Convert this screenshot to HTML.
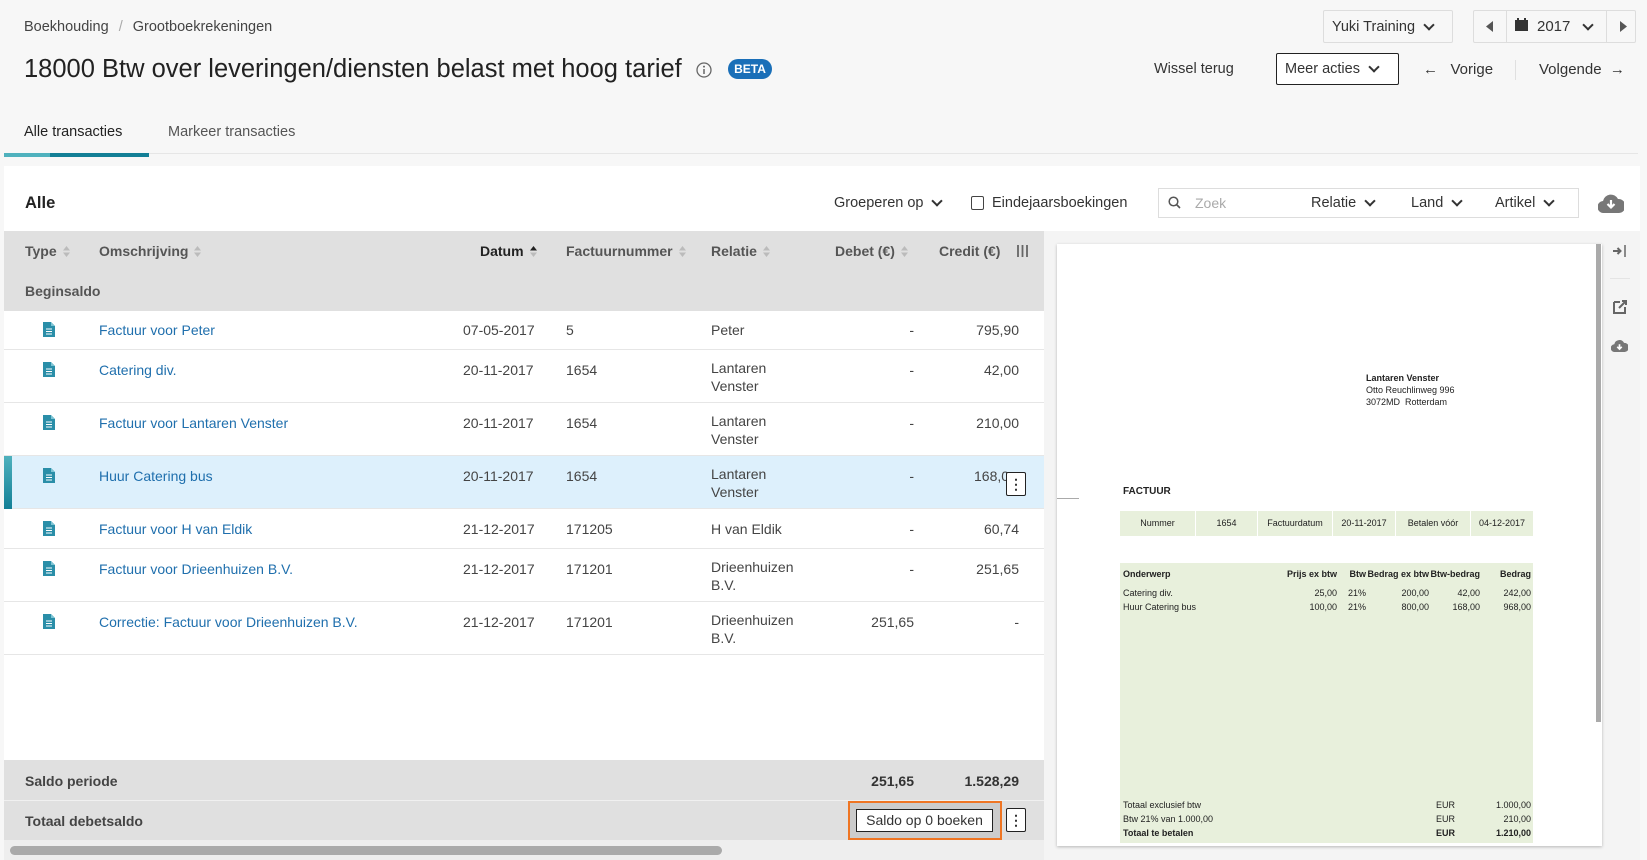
<!DOCTYPE html>
<html><head><meta charset="utf-8">
<style>
*{box-sizing:border-box;margin:0;padding:0}
body{width:1647px;height:860px;overflow:hidden;background:#f7f7f7;font-family:"Liberation Sans",sans-serif;color:#333;font-size:14px;position:relative}
.a{position:absolute;white-space:nowrap}
.hd{color:#555;font-weight:bold;font-size:14px}
.lk{color:#1f6fad;font-size:14px}
.tx{color:#444;font-size:14px}
.sort{display:inline-block;width:7px;height:11px;vertical-align:-1px;margin-left:6px}
.box{position:absolute;border:1px solid #ddd;background:#f7f7f7}
.chev{display:inline-block;width:8px;height:8px;border-right:2px solid #333;border-bottom:2px solid #333;transform:rotate(45deg);vertical-align:2px;margin-left:10px}
.row{position:absolute;left:4px;width:1040px;border-bottom:1px solid #e6e6e6;background:#fff}
.ico{position:absolute;left:43px;width:12px;height:15px}
.inv{font-size:9px;color:#222;position:absolute;white-space:nowrap}
</style></head><body>
<svg width="0" height="0" style="position:absolute"><defs>
<symbol id="doc" viewBox="0 0 12 15"><path d="M0 0H8L12 4V15H0Z" fill="#2a8ea8"/><path d="M8 0V4H12Z" fill="#7cc4d4"/><path d="M3 7H9M3 9.5H9M3 12H9" stroke="#fff" stroke-width="1"/></symbol>
<symbol id="srt" viewBox="0 0 7 11"><path d="M0 4.5L3.5 0L7 4.5Z M0 6.5L3.5 11L7 6.5Z" fill="#bbb"/></symbol>
</defs></svg>

<div class="a" style="left:24px;top:19px;font-size:14.5px;color:#444">Boekhouding <span style="color:#aaa;margin:0 6px">/</span> Grootboekrekeningen</div>
<div class="a" style="left:24px;top:55px;font-size:25.5px;color:#222">18000 Btw over leveringen/diensten belast met hoog tarief</div>
<svg class="a" style="left:696px;top:62px" width="16" height="16" viewBox="0 0 16 16"><circle cx="8" cy="8" r="7" fill="none" stroke="#666" stroke-width="1.3"/><circle cx="8" cy="4.6" r="1" fill="#666"/><path d="M8 7V12" stroke="#666" stroke-width="1.5"/></svg>
<div class="a" style="left:728px;top:59px;width:44px;height:20px;border-radius:10px;background:#1a6fb8;color:#fff;font-size:12px;font-weight:bold;text-align:center;line-height:20px">BETA</div>

<div class="box" style="left:1323px;top:10px;width:130px;height:33px;border-radius:2px"></div>
<div class="a" style="left:1332px;top:19px;font-size:14.5px">Yuki Training<span class="chev"></span></div>
<div class="box" style="left:1473px;top:10px;width:163px;height:33px;border-radius:2px"></div>
<div class="a" style="left:1506px;top:10px;width:1px;height:33px;background:#ddd"></div>
<div class="a" style="left:1606px;top:10px;width:1px;height:33px;background:#ddd"></div>
<svg class="a" style="left:1486px;top:21px" width="7" height="11"><path d="M7 0V11L0 5.5Z" fill="#555"/></svg>
<svg class="a" style="left:1620px;top:21px" width="7" height="11"><path d="M0 0V11L7 5.5Z" fill="#555"/></svg>
<svg class="a" style="left:1515px;top:18px" width="13" height="13" viewBox="0 0 13 13"><rect x="0" y="2" width="13" height="11" fill="#333"/><rect x="2" y="0" width="2" height="3" fill="#333"/><rect x="9" y="0" width="2" height="3" fill="#333"/></svg>
<div class="a" style="left:1537px;top:18px;font-size:15px">2017<span class="chev" style="margin-left:14px"></span></div>

<div class="a" style="left:1154px;top:61px;font-size:14.5px">Wissel terug</div>
<div class="a" style="left:1276px;top:53px;width:123px;height:32px;border:1px solid #222;background:#fff;border-radius:2px"></div>
<div class="a" style="left:1285px;top:61px;font-size:14.5px">Meer acties<span class="chev"></span></div>
<div class="a" style="left:1423px;top:61px;font-size:15px">←&nbsp;&nbsp;&nbsp;Vorige</div>
<div class="a" style="left:1515px;top:60px;width:1px;height:20px;background:#e0e0e0"></div>
<div class="a" style="left:1539px;top:61px;font-size:15px">Volgende&nbsp;&nbsp;→</div>

<div class="a" style="left:24px;top:124px;font-size:14.5px;color:#222">Alle transacties</div>
<div class="a" style="left:168px;top:124px;font-size:14.5px;color:#555">Markeer transacties</div>
<div class="a" style="left:4px;top:153px;width:1634px;height:1px;background:#e6e6e6"></div>
<div class="a" style="left:4px;top:153px;width:145px;height:4px;background:#137f96"></div>
<div class="a" style="left:4px;top:153px;width:46px;height:4px;background:#4fb1bd"></div>

<div class="a" style="left:4px;top:166px;width:1636px;height:694px;background:#fff"></div>
<div class="a" style="left:25px;top:194px;font-size:16.5px;font-weight:bold;color:#222">Alle</div>
<div class="a" style="left:834px;top:195px;font-size:14.5px">Groeperen op<span class="chev"></span></div>
<div class="a" style="left:971px;top:196px;width:13px;height:14px;border:1.5px solid #444;border-radius:2px"></div>
<div class="a" style="left:992px;top:195px;font-size:14.5px">Eindejaarsboekingen</div>
<div class="a" style="left:1158px;top:188px;width:421px;height:30px;border:1px solid #ddd"></div>
<svg class="a" style="left:1168px;top:196px" width="13" height="13"><circle cx="5.5" cy="5.5" r="4.3" fill="none" stroke="#555" stroke-width="1.5"/><path d="M8.5 8.5L12 12" stroke="#555" stroke-width="1.6"/></svg>
<div class="a" style="left:1195px;top:195px;font-size:14px;color:#aaa">Zoek</div>
<div class="a" style="left:1311px;top:195px;font-size:14.5px">Relatie<span class="chev"></span></div>
<div class="a" style="left:1411px;top:195px;font-size:14.5px">Land<span class="chev"></span></div>
<div class="a" style="left:1495px;top:195px;font-size:14.5px">Artikel<span class="chev"></span></div>
<svg class="a" style="left:1598px;top:193px" width="26" height="20" viewBox="0 0 26 20"><path d="M6 20A6 6 0 0 1 5 8A8 8 0 0 1 20 6A7 7 0 0 1 21 20Z" fill="#777"/><path d="M13 7V14M9.5 11L13 14.5L16.5 11" stroke="#fff" stroke-width="2.2" fill="none"/></svg>

<div class="a" style="left:4px;top:231px;width:1040px;height:80px;background:#e0e0e0"></div>
<div class="a hd" style="left:25px;top:243px">Type<svg class="sort"><use href="#srt"/></svg></div>
<div class="a hd" style="left:99px;top:243px">Omschrijving<svg class="sort"><use href="#srt"/></svg></div>
<div class="a hd" style="left:480px;top:243px;color:#222">Datum<svg class="sort" viewBox="0 0 7 11"><path d="M0 4.5L3.5 0L7 4.5Z" fill="#222"/><path d="M0 6.5L3.5 11L7 6.5Z" fill="#bbb"/></svg></div>
<div class="a hd" style="left:566px;top:243px">Factuurnummer<svg class="sort"><use href="#srt"/></svg></div>
<div class="a hd" style="left:711px;top:243px">Relatie<svg class="sort"><use href="#srt"/></svg></div>
<div class="a hd" style="left:835px;top:243px">Debet (€)<svg class="sort"><use href="#srt"/></svg></div>
<div class="a hd" style="left:939px;top:243px">Credit (€)</div>
<svg class="a" style="left:1017px;top:245px" width="11" height="12"><path d="M1 0V12M5.5 0V12M10 0V12" stroke="#666" stroke-width="1.8"/></svg>
<div class="a hd" style="left:25px;top:283px">Beginsaldo</div>

<div class="row" style="top:311px;height:39px"></div>
<div class="row" style="top:350px;height:53px"></div>
<div class="row" style="top:403px;height:53px"></div>
<div class="row" style="top:456px;height:53px;background:#ddf0fc"></div>
<div class="a" style="left:4px;top:456px;width:8px;height:53px;background:linear-gradient(#4fb1bd,#137f96)"></div>
<div class="row" style="top:509px;height:40px"></div>
<div class="row" style="top:549px;height:53px"></div>
<div class="row" style="top:602px;height:53px"></div>

<svg class="ico" style="top:322px"><use href="#doc"/></svg>
<svg class="ico" style="top:362px"><use href="#doc"/></svg>
<svg class="ico" style="top:415px"><use href="#doc"/></svg>
<svg class="ico" style="top:468px"><use href="#doc"/></svg>
<svg class="ico" style="top:521px"><use href="#doc"/></svg>
<svg class="ico" style="top:561px"><use href="#doc"/></svg>
<svg class="ico" style="top:614px"><use href="#doc"/></svg>

<div class="a lk" style="left:99px;top:322px">Factuur voor Peter</div>
<div class="a lk" style="left:99px;top:362px">Catering div.</div>
<div class="a lk" style="left:99px;top:415px">Factuur voor Lantaren Venster</div>
<div class="a lk" style="left:99px;top:468px">Huur Catering bus</div>
<div class="a lk" style="left:99px;top:521px">Factuur voor H van Eldik</div>
<div class="a lk" style="left:99px;top:561px">Factuur voor Drieenhuizen B.V.</div>
<div class="a lk" style="left:99px;top:614px">Correctie: Factuur voor Drieenhuizen B.V.</div>

<div class="a tx" style="left:463px;top:322px">07-05-2017</div><div class="a tx" style="left:566px;top:322px">5</div><div class="a tx" style="left:711px;top:322px">Peter</div>
<div class="a tx" style="left:463px;top:362px">20-11-2017</div><div class="a tx" style="left:566px;top:362px">1654</div><div class="a tx" style="left:711px;top:359px;line-height:18px">Lantaren<br>Venster</div>
<div class="a tx" style="left:463px;top:415px">20-11-2017</div><div class="a tx" style="left:566px;top:415px">1654</div><div class="a tx" style="left:711px;top:412px;line-height:18px">Lantaren<br>Venster</div>
<div class="a tx" style="left:463px;top:468px">20-11-2017</div><div class="a tx" style="left:566px;top:468px">1654</div><div class="a tx" style="left:711px;top:465px;line-height:18px">Lantaren<br>Venster</div>
<div class="a tx" style="left:463px;top:521px">21-12-2017</div><div class="a tx" style="left:566px;top:521px">171205</div><div class="a tx" style="left:711px;top:521px">H van Eldik</div>
<div class="a tx" style="left:463px;top:561px">21-12-2017</div><div class="a tx" style="left:566px;top:561px">171201</div><div class="a tx" style="left:711px;top:558px;line-height:18px">Drieenhuizen<br>B.V.</div>
<div class="a tx" style="left:463px;top:614px">21-12-2017</div><div class="a tx" style="left:566px;top:614px">171201</div><div class="a tx" style="left:711px;top:611px;line-height:18px">Drieenhuizen<br>B.V.</div>

<div class="a tx" style="right:733px;top:322px">-</div><div class="a tx" style="right:628px;top:322px">795,90</div>
<div class="a tx" style="right:733px;top:362px">-</div><div class="a tx" style="right:628px;top:362px">42,00</div>
<div class="a tx" style="right:733px;top:415px">-</div><div class="a tx" style="right:628px;top:415px">210,00</div>
<div class="a tx" style="right:733px;top:468px">-</div><div class="a tx" style="left:974px;top:468px;width:34px;overflow:hidden">168,00</div>
<div class="a tx" style="right:733px;top:521px">-</div><div class="a tx" style="right:628px;top:521px">60,74</div>
<div class="a tx" style="right:733px;top:561px">-</div><div class="a tx" style="right:628px;top:561px">251,65</div>
<div class="a tx" style="right:733px;top:614px">251,65</div><div class="a tx" style="right:628px;top:614px">-</div>
<div class="a" style="left:1006px;top:472px;width:20px;height:24px;border:1px solid #222;border-radius:2px;background:#fff;text-align:center;font-weight:bold;line-height:22px;font-size:14px">⋮</div>

<div class="a" style="left:4px;top:760px;width:1040px;height:80px;background:#e0e0e0"></div>
<div class="a" style="left:4px;top:800px;width:1040px;height:1px;background:#f0f0f0"></div>
<div class="a hd" style="left:25px;top:773px;color:#444">Saldo periode</div>
<div class="a hd" style="right:733px;top:773px;color:#333">251,65</div>
<div class="a hd" style="right:628px;top:773px;color:#333">1.528,29</div>
<div class="a hd" style="left:25px;top:813px;color:#444">Totaal debetsaldo</div>
<div class="a" style="left:848px;top:801px;width:154px;height:39px;border:2px solid #ef7523;background:#ccc"></div>
<div class="a" style="left:856px;top:809px;width:137px;height:23px;border:1px solid #222;background:#fff;font-size:14px;text-align:center;line-height:21px">Saldo op 0 boeken</div>
<div class="a" style="left:1006px;top:808px;width:20px;height:24px;border:1px solid #222;border-radius:2px;background:#fff;text-align:center;font-weight:bold;line-height:22px;font-size:14px">⋮</div>
<div class="a" style="left:4px;top:840px;width:1040px;height:20px;background:#eee"></div>
<div class="a" style="left:10px;top:846px;width:712px;height:9px;border-radius:5px;background:#aaa"></div>

<div class="a" style="left:1044px;top:231px;width:596px;height:629px;background:#f4f4f4"></div>
<div class="a" style="left:1057px;top:244px;width:545px;height:602px;background:#fff;box-shadow:0 1px 3px rgba(0,0,0,.25)"></div>
<div class="a" style="left:1596px;top:244px;width:5px;height:478px;background:#aaa"></div>
<div class="a" style="left:1057px;top:498px;width:22px;height:1px;background:#aaa"></div>
<svg class="a" style="left:1613px;top:245px" width="14" height="12"><path d="M0 6H7M4.5 3L7.5 6L4.5 9" stroke="#666" stroke-width="2" fill="none"/><path d="M12 0V12" stroke="#666" stroke-width="1.5"/></svg>
<div class="a" style="left:1610px;top:278px;width:20px;height:1px;background:#e4e4e4"></div>
<svg class="a" style="left:1613px;top:300px" width="14" height="14"><path d="M1 2H7M1 2V13H12V7" stroke="#666" stroke-width="2" fill="none"/><path d="M6 8L13 1M9 1H13V5" stroke="#666" stroke-width="2" fill="none"/></svg>
<svg class="a" style="left:1611px;top:339px" width="17" height="13" viewBox="0 0 26 20"><path d="M6 20A6 6 0 0 1 5 8A8 8 0 0 1 20 6A7 7 0 0 1 21 20Z" fill="#777"/><path d="M13 8V15M9.5 12L13 15.5L16.5 12" stroke="#fff" stroke-width="2.6" fill="none"/></svg>

<div class="inv" style="left:1366px;top:373px;font-weight:bold;color:#222">Lantaren Venster</div>
<div class="inv" style="left:1366px;top:385px">Otto Reuchlinweg 996</div>
<div class="inv" style="left:1366px;top:397px">3072MD&nbsp; Rotterdam</div>
<div class="inv" style="left:1123px;top:486px;font-weight:bold;font-size:10px">FACTUUR</div>
<div class="a" style="left:1120px;top:511px;width:413px;height:25px;background:#e8f0dc;display:flex;font-size:9px;color:#222;line-height:25px;text-align:center">
<div style="width:76px;border-right:1px solid #fff">Nummer</div><div style="width:62px;border-right:1px solid #fff">1654</div><div style="width:75px;border-right:1px solid #fff">Factuurdatum</div><div style="width:63px;border-right:1px solid #fff">20-11-2017</div><div style="width:75px;border-right:1px solid #fff">Betalen vóór</div><div style="flex:1">04-12-2017</div></div>
<div class="a" style="left:1120px;top:563px;width:413px;height:280px;background:#e8f0dc"></div>
<div class="inv" style="left:1123px;top:569px;font-weight:bold">Onderwerp</div>
<div class="inv" style="right:310px;top:569px;font-weight:bold">Prijs ex btw</div>
<div class="inv" style="right:281px;top:569px;font-weight:bold">Btw</div>
<div class="inv" style="right:218px;top:569px;font-weight:bold">Bedrag ex btw</div>
<div class="inv" style="right:167px;top:569px;font-weight:bold">Btw-bedrag</div>
<div class="inv" style="right:116px;top:569px;font-weight:bold">Bedrag</div>
<div class="inv" style="left:1123px;top:588px">Catering div.</div>
<div class="inv" style="right:310px;top:588px">25,00</div><div class="inv" style="left:1348px;top:588px">21%</div><div class="inv" style="right:218px;top:588px">200,00</div><div class="inv" style="right:167px;top:588px">42,00</div><div class="inv" style="right:116px;top:588px">242,00</div>
<div class="inv" style="left:1123px;top:602px">Huur Catering bus</div>
<div class="inv" style="right:310px;top:602px">100,00</div><div class="inv" style="left:1348px;top:602px">21%</div><div class="inv" style="right:218px;top:602px">800,00</div><div class="inv" style="right:167px;top:602px">168,00</div><div class="inv" style="right:116px;top:602px">968,00</div>
<div class="inv" style="left:1123px;top:800px">Totaal exclusief btw</div><div class="inv" style="left:1436px;top:800px">EUR</div><div class="inv" style="right:116px;top:800px">1.000,00</div>
<div class="inv" style="left:1123px;top:814px">Btw 21% van 1.000,00</div><div class="inv" style="left:1436px;top:814px">EUR</div><div class="inv" style="right:116px;top:814px">210,00</div>
<div class="inv" style="left:1123px;top:828px;font-weight:bold">Totaal te betalen</div><div class="inv" style="left:1436px;top:828px;font-weight:bold">EUR</div><div class="inv" style="right:116px;top:828px;font-weight:bold">1.210,00</div>
</body></html>
